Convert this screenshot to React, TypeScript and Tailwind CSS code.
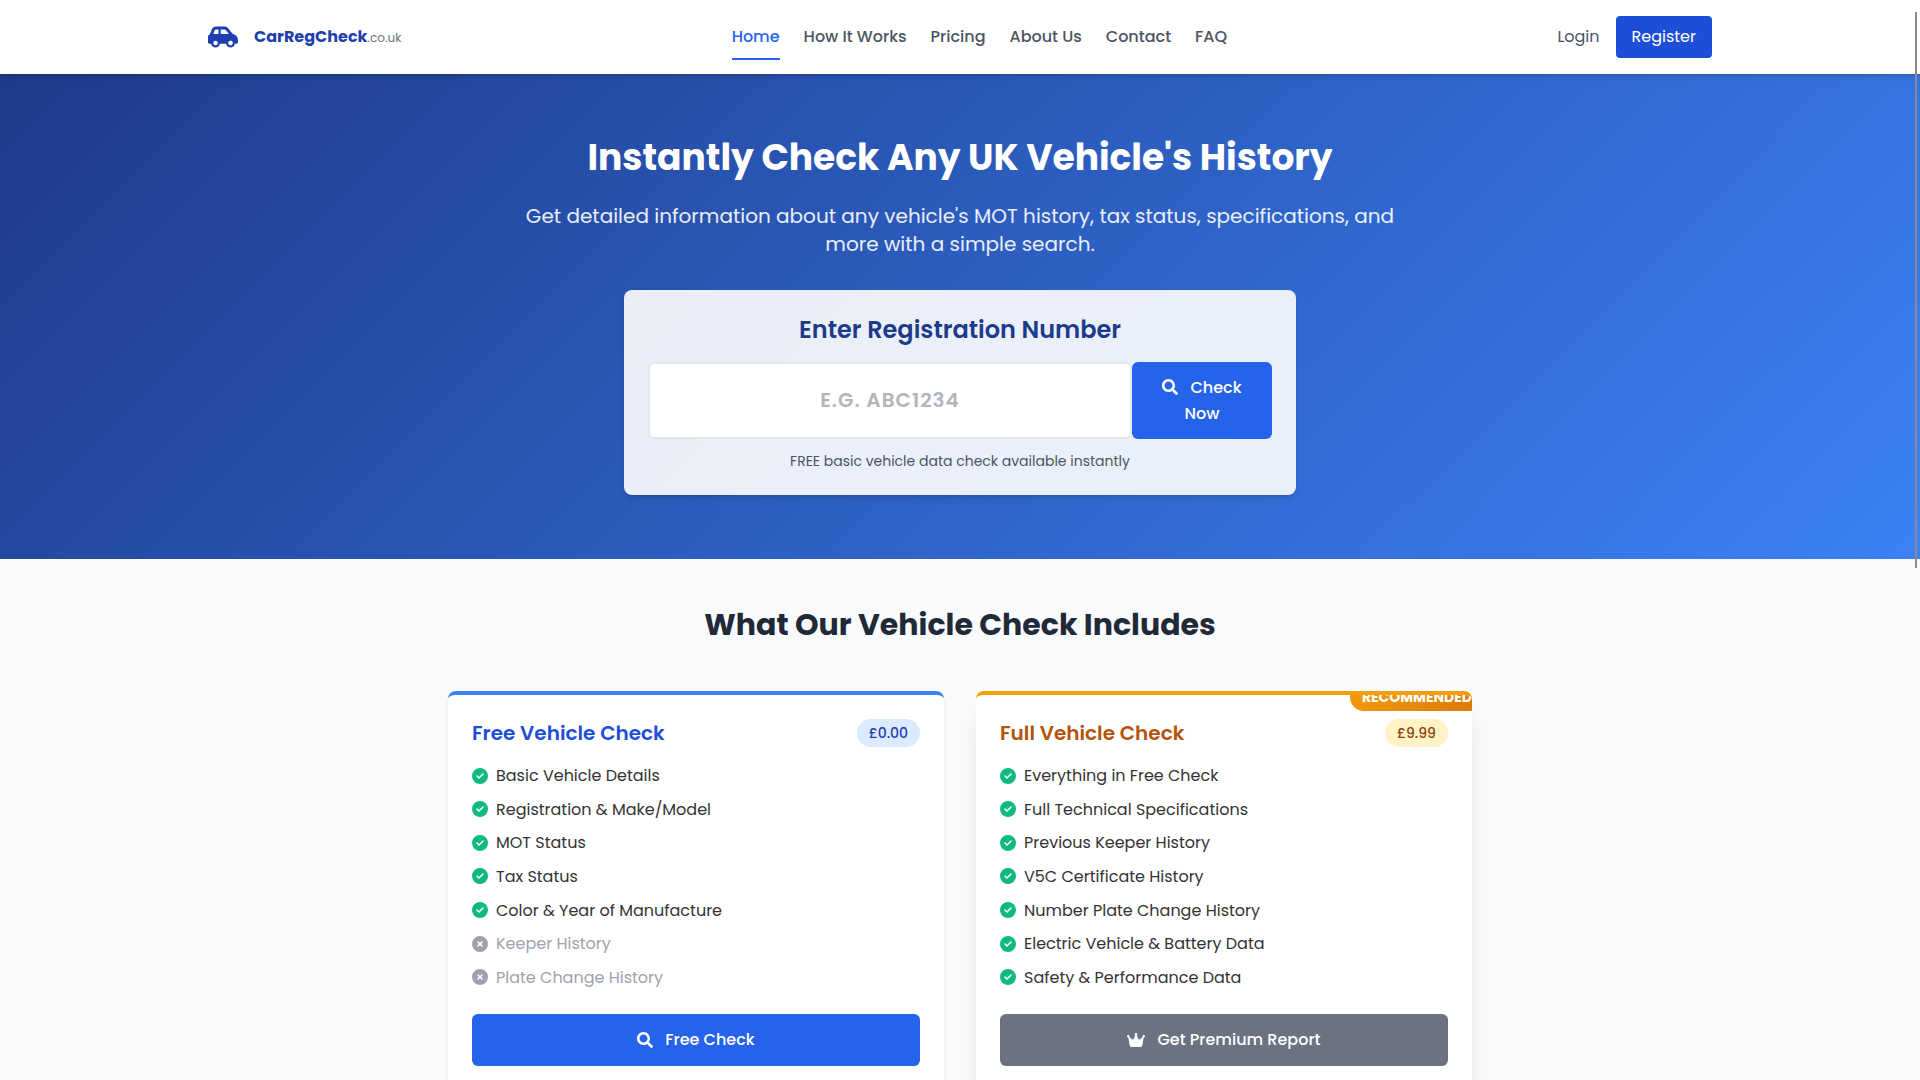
import { FaSearch } from "react-icons/fa";
import { FaCarSide, FaCircleCheck, FaCircleXmark, FaCrown } from "react-icons/fa6";

const navLinks = ["How It Works", "Pricing", "About Us", "Contact", "FAQ"];

const freeFeatures = [
  { label: "Basic Vehicle Details", included: true },
  { label: "Registration & Make/Model", included: true },
  { label: "MOT Status", included: true },
  { label: "Tax Status", included: true },
  { label: "Color & Year of Manufacture", included: true },
  { label: "Keeper History", included: false },
  { label: "Plate Change History", included: false },
];

const fullFeatures = [
  { label: "Everything in Free Check", included: true },
  { label: "Full Technical Specifications", included: true },
  { label: "Previous Keeper History", included: true },
  { label: "V5C Certificate History", included: true },
  { label: "Number Plate Change History", included: true },
  { label: "Electric Vehicle & Battery Data", included: true },
  { label: "Safety & Performance Data", included: true },
];

function FeatureList({ items }: { items: { label: string; included: boolean }[] }) {
  return (
    <ul className="mb-6 flex min-h-[227px] flex-col justify-between">
      {items.map((item) => (
        <li
          key={item.label}
          className={
            item.included
              ? "flex items-center gap-2 leading-[25px] text-[#333333]"
              : "flex items-center gap-2 leading-[25px] text-[#9ca3af]"
          }
        >
          {item.included ? (
            <FaCircleCheck className="size-4 shrink-0 text-[#10b981]" />
          ) : (
            <FaCircleXmark className="size-4 shrink-0 text-[#9ca3af]" />
          )}
          {item.label}
        </li>
      ))}
    </ul>
  );
}

function Header() {
  return (
    <header className="relative z-10 bg-white shadow-md">
      <div className="mx-auto flex max-w-[1536px] items-center justify-between px-4 py-4">
        <a href="#" className="flex items-center gap-4 text-[#1e40af]">
          <FaCarSide className="h-6 w-[30px]" />
          <span className="leading-6">
            <span className="font-bold">CarRegCheck</span>
            <span className="text-xs text-[#6b7280]">.co.uk</span>
          </span>
        </a>
        <nav className="flex items-center gap-6 font-medium">
          <a href="#" className="relative text-[#2563eb] after:absolute after:inset-x-0 after:-bottom-[11px] after:h-0.5 after:bg-[#2563eb]">
            Home
          </a>
          {navLinks.map((label) => (
            <a key={label} href="#" className="text-[#4b5563]">
              {label}
            </a>
          ))}
        </nav>
        <div className="flex items-center gap-4">
          <a href="#" className="text-[#4b5563]">Login</a>
          <a href="#" className="rounded bg-[#1d4ed8] px-4 py-[9px] text-white">Register</a>
        </div>
      </div>
    </header>
  );
}

function Hero() {
  return (
    <section className="bg-[linear-gradient(135deg,#1e3a8a_0%,#3b82f6_100%)] px-4 py-16 text-center">
      <h1 className="mb-6 text-4xl font-bold text-white">Instantly Check Any UK Vehicle's History</h1>
      <p className="mx-auto mb-8 max-w-[896px] text-xl leading-7 text-white/90">
        Get detailed information about any vehicle's MOT history, tax status, specifications, and
        more with a simple search.
      </p>
      <div className="mx-auto max-w-2xl rounded-lg bg-white/90 p-6 shadow-md">
        <h2 className="mb-4 text-2xl font-semibold text-[#1e3a8a]">Enter Registration Number</h2>
        <form className="flex min-h-[77px]" onSubmit={(e) => e.preventDefault()}>
          <input
            type="text"
            aria-label="Registration number"
            placeholder="E.G. ABC1234"
            className="min-w-0 flex-1 rounded-md border-2 border-[#e5e7eb] bg-white pb-0.5 text-center text-xl font-semibold tracking-wider text-[#1f2937] uppercase placeholder:text-[#b0b5be]"
          />
          <button type="submit" className="w-[140px] rounded-md bg-[#2563eb] px-6 leading-[26px] font-medium text-white">
            <FaSearch className="mr-3 inline size-4 align-[-2px]" />
            Check Now
          </button>
        </form>
        <p className="mt-3 text-sm text-[#4b5563]">FREE basic vehicle data check available instantly</p>
      </div>
    </section>
  );
}

function Plans() {
  return (
    <section className="bg-[#f9fafb] px-4 py-12">
      <h2 className="mb-12 text-center text-3xl leading-9 font-bold text-[#1f2937]">What Our Vehicle Check Includes</h2>
      <div className="mx-auto grid max-w-5xl grid-cols-2 gap-8">
        <article className="rounded-lg border-t-4 border-[#3b82f6] bg-white p-6 shadow-md">
          <div className="mb-4 flex items-center justify-between">
            <h3 className="text-xl font-semibold text-[#1d4ed8]">Free Vehicle Check</h3>
            <span className="rounded-full bg-[#dbeafe] px-3 py-1 text-sm font-medium text-[#1e40af]">£0.00</span>
          </div>
          <FeatureList items={freeFeatures} />
          <button type="button" className="flex min-h-[52px] w-full items-center justify-center gap-3 rounded-md bg-[#2563eb] font-medium text-white">
            <FaSearch className="size-4" />
            Free Check
          </button>
        </article>
        <article className="relative overflow-hidden rounded-lg border-t-4 border-[#f59e0b] bg-white p-6 shadow-xl">
          <span className="absolute -top-3 -right-3 rounded-full bg-[linear-gradient(135deg,#f59e0b,#d97706)] px-3 py-1 text-sm font-bold text-white">
            RECOMMENDED
          </span>
          <div className="mb-4 flex items-center justify-between">
            <h3 className="text-xl font-semibold text-[#b45309]">Full Vehicle Check</h3>
            <span className="rounded-full bg-[#fef3c7] px-3 py-1 text-sm font-medium text-[#92400e]">£9.99</span>
          </div>
          <FeatureList items={fullFeatures} />
          <button type="button" className="flex min-h-[52px] w-full items-center justify-center gap-3 rounded-md bg-[#6b7280] font-medium text-white">
            <FaCrown className="h-4 w-[18px]" />
            Get Premium Report
          </button>
        </article>
      </div>
    </section>
  );
}

export default function App() {
  return (
    <div className="h-screen overflow-hidden bg-[#f9fafb] font-['Poppins','Inter',sans-serif] text-base">
      <Header />
      <main>
        <Hero />
        <Plans />
      </main>
      <div className="fixed top-3 right-[3px] z-20 h-[556px] w-0.5 bg-[#8a8a8a]" />
    </div>
  );
}
